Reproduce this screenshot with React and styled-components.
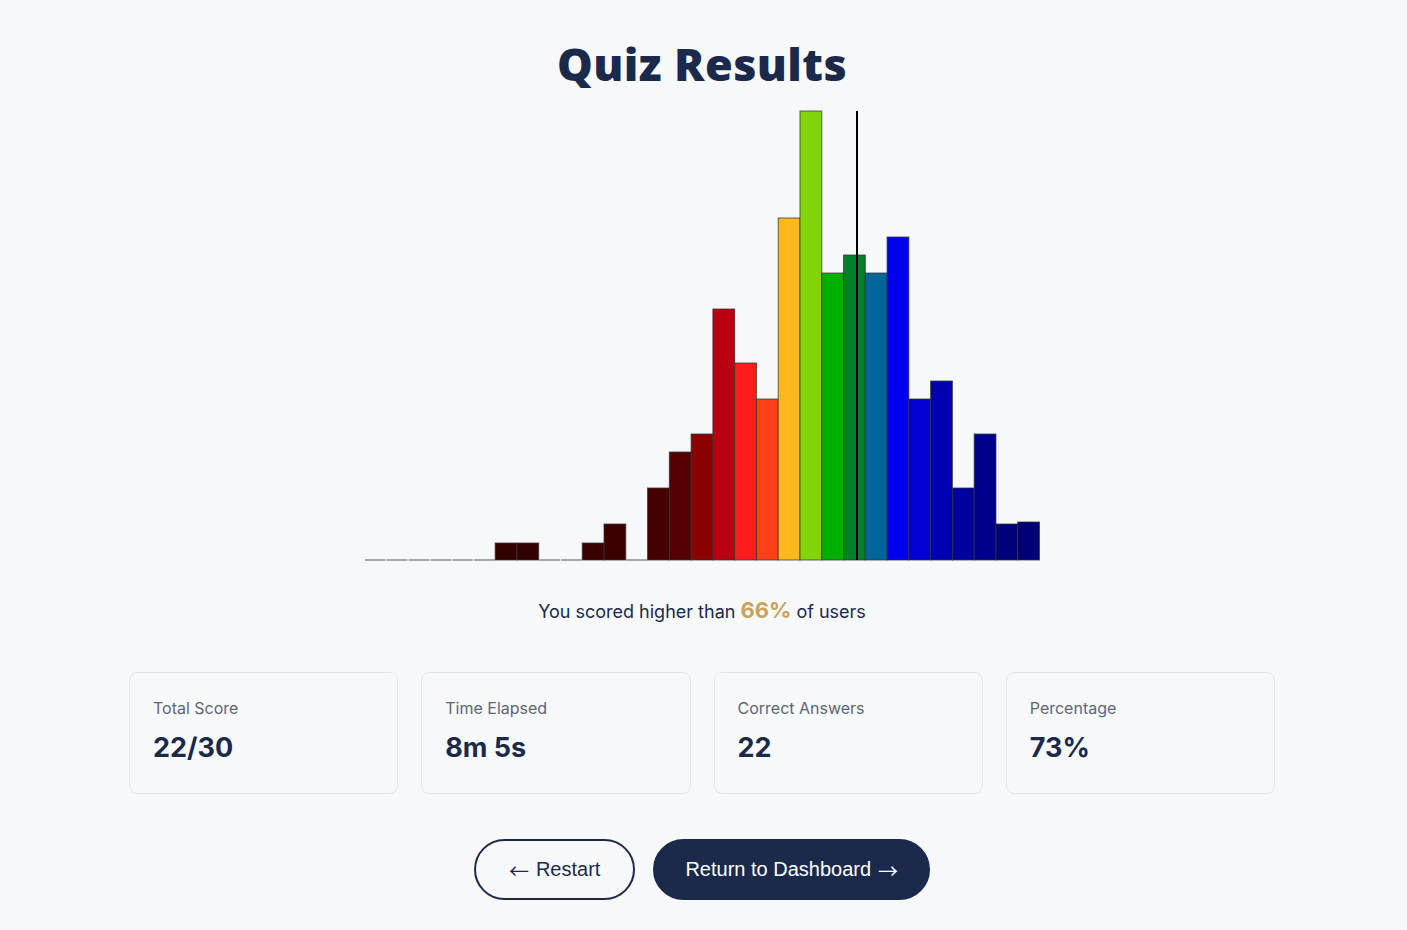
import React from "react";
import styled, { createGlobalStyle } from "styled-components";

const Global = createGlobalStyle`
  html, body { margin: 0; padding: 0; background: #f7f8fa; }
  body { font-family: Inter, "Noto Sans", sans-serif; color: #1b2a4a; }
`;

const Page = styled.main`
  display: flex;
  flex-direction: column;
  align-items: center;
  padding: 37px 3px 0 0;
  min-height: 930px;
  box-sizing: border-box;
`;

const Title = styled.h1`
  margin: 0;
  font-family: "Open Sans", "DejaVu Sans", sans-serif;
  font-weight: 800;
  font-size: 45px;
  line-height: 54px;
  color: #1b2a4a;
  letter-spacing: 0.4px;
`;

const ChartWrap = styled.div`
  margin-top: 19px;
  width: 676px;
  height: 452px;
  display: block;
`;

const Summary = styled.p`
  margin: 33px 0 0;
  font-size: 18px;
  line-height: 30px;
  color: #1b2a4a;
`;

const Highlight = styled.span`
  font-size: 22px;
  font-weight: 700;
  color: #c9a35b;
`;

const Cards = styled.section`
  margin-top: 45px;
  width: 1146px;
  display: grid;
  grid-template-columns: repeat(4, 1fr);
  gap: 23px;
`;

const Card = styled.div`
  border: 1px solid #e3e5ea;
  border-radius: 8px;
  height: 122px;
  box-sizing: border-box;
  padding: 24px 23px;
  display: flex;
  flex-direction: column;
`;

const Label = styled.div`
  font-size: 16px;
  line-height: 22px;
  color: #5f6673;
`;

const Value = styled.div`
  margin-top: 12px;
  font-size: 27px;
  line-height: 34px;
  font-weight: 700;
  color: #1b2a4a;
`;

const Actions = styled.div`
  margin-top: 45px;
  display: flex;
  gap: 18px;
`;

const Button = styled.button`
  height: 61px;
  padding: 0 ${(p) => (p.$primary ? "30px" : "33px")};
  border-radius: 31px;
  border: 2px solid #1b2a4a;
  background: ${(p) => (p.$primary ? "#1b2a4a" : "transparent")};
  color: ${(p) => (p.$primary ? "#ffffff" : "#1b2a4a")};
  font-family: "Liberation Sans", Arial, sans-serif;
  font-size: 20px;
  cursor: pointer;
  box-sizing: border-box;
  display: inline-flex;
  align-items: center;
  gap: 7px;
`;

const Arrow = styled.span`
  font-family: "Noto Sans CJK JP", sans-serif;
  font-size: 20px;
  line-height: 1;
  position: relative;
  top: 1px;
`;

const heights = [0,0,0,0,0,0,17,17,0,0,17,36,0,72,108,126,251,197,161,342,449,287,305,287,323,161,179,72,126,36,38];
const colors = [
  "#330000","#330000","#330000","#330000","#330000","#330000","#330000","#330000","#330000","#330000",
  "#3a0000","#3d0000","#440000","#440000","#550000","#8b0000","#b80010","#ff1c1c","#ff4019","#ffb81c",
  "#82d40a","#00b000","#008028","#006699","#0000ee","#0000d2","#0000b0","#00009e","#00008a","#00007a","#000077",
];

function Histogram() {
  const bw = 675 / 31;
  const base = 450;
  return (
    <svg width="676" height="452" viewBox="0 0 676 452">
      {heights.map((h, i) =>
        h === 0 ? (
          <line key={i} x1={i * bw + 1} x2={(i + 1) * bw} y1={base} y2={base} stroke="#555" strokeWidth="1" />
        ) : (
          <rect
            key={i}
            x={i * bw + 0.5}
            y={base - h}
            width={bw}
            height={h}
            fill={colors[i]}
            stroke="#333"
            strokeOpacity="0.75"
            strokeWidth="1"
          />
        )
      )}
      <line x1="493" x2="493" y1="1" y2={base} stroke="#000" strokeWidth="2" />
    </svg>
  );
}

const stats = [
  { label: "Total Score", value: "22/30" },
  { label: "Time Elapsed", value: "8m 5s" },
  { label: "Correct Answers", value: "22" },
  { label: "Percentage", value: "73%" },
];

export default function App() {
  return (
    <>
      <Global />
      <Page>
        <Title>Quiz Results</Title>
        <ChartWrap>
          <Histogram />
        </ChartWrap>
        <Summary>
          You scored higher than <Highlight>66%</Highlight> of users
        </Summary>
        <Cards>
          {stats.map((s) => (
            <Card key={s.label}>
              <Label>{s.label}</Label>
              <Value>{s.value}</Value>
            </Card>
          ))}
        </Cards>
        <Actions>
          <Button><Arrow>←</Arrow>Restart</Button>
          <Button $primary>Return to Dashboard<Arrow>→</Arrow></Button>
        </Actions>
      </Page>
    </>
  );
}
